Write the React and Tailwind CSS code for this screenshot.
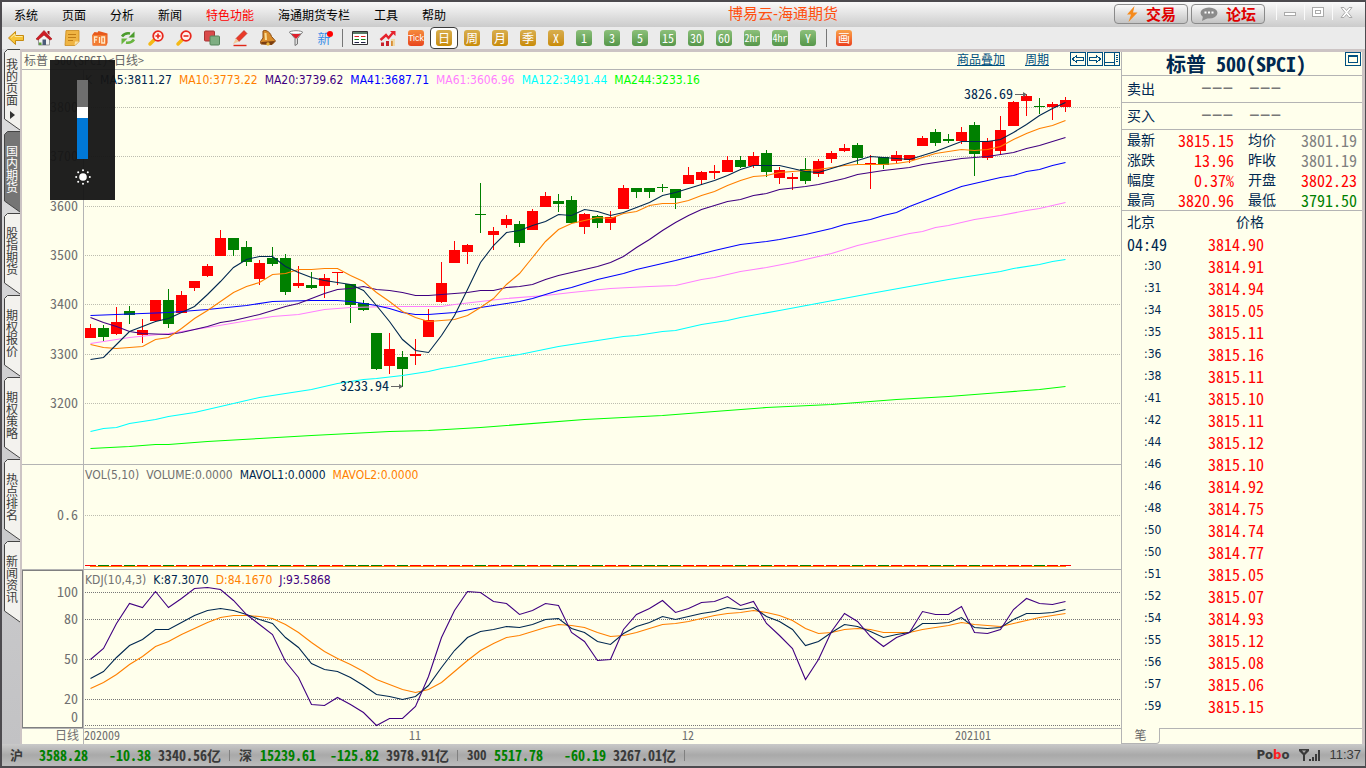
import React, { useState } from 'react'
import clsx from 'clsx'

const MONO = "[font-family:'Noto_Sans_Mono_CJK_SC','Liberation_Mono','Noto_Sans_CJK_SC',monospace]"
const SANS = "[font-family:'DejaVu_Sans_Condensed','Noto_Sans','Noto_Sans_CJK_SC',sans-serif]"

const menus = ['系统', '页面', '分析', '新闻', '特色功能', '海通期货专栏', '工具', '帮助']

const sideTabs = ['我的页面', '国内期货', '股指期货', '期权报价', '期权策略', '热点排名', '新闻资讯']

// [direction, body top, body bottom, wick top, wick bottom]
const candles = [
  ['r', 328, 338, 324, 338], ['g', 328, 337, 325, 341], ['r', 322, 334, 307, 335], ['g', 311, 315, 306, 324],
  ['r', 330, 335, 319, 343], ['r', 300, 321, 300, 321], ['g', 300, 324, 289, 328], ['r', 295, 313, 291, 313],
  ['r', 281, 288, 281, 291], ['r', 266, 276, 264, 277], ['r', 238, 256, 230, 256], ['g', 238, 250, 238, 256],
  ['g', 247, 262, 241, 266], ['r', 263, 279, 260, 285], ['g', 258, 264, 247, 266], ['g', 258, 292, 254, 295],
  ['r', 283, 286, 266, 288], ['g', 285, 288, 272, 289], ['r', 278, 286, 274, 298], ['r', 272, 273, 272, 285],
  ['g', 284, 305, 284, 323], ['g', 303, 310, 300, 311], ['g', 333, 369, 333, 370], ['r', 349, 366, 333, 374],
  ['g', 357, 369, 351, 387], ['r', 354, 356, 339, 365], ['r', 320, 337, 309, 337], ['r', 283, 302, 262, 303],
  ['r', 250, 263, 241, 263], ['r', 245, 252, 244, 264], ['g', 214, 215, 183, 233], ['r', 231, 235, 227, 250],
  ['r', 219, 225, 215, 228], ['g', 224, 243, 221, 247], ['r', 211, 230, 209, 230], ['r', 196, 207, 192, 207],
  ['g', 201, 204, 194, 212], ['g', 200, 223, 196, 223], ['r', 214, 227, 213, 234], ['g', 216, 223, 215, 228],
  ['r', 217, 223, 211, 230], ['r', 188, 209, 185, 209], ['g', 188, 192, 188, 198], ['g', 188, 192, 188, 198],
  ['g', 187, 188, 184, 192], ['g', 189, 198, 189, 209], ['r', 175, 184, 167, 184], ['r', 172, 180, 171, 185],
  ['r', 171, 173, 165, 179], ['r', 160, 172, 156, 172], ['g', 160, 167, 156, 168], ['r', 156, 166, 152, 168],
  ['g', 153, 172, 150, 177], ['r', 170, 178, 167, 184], ['r', 177, 179, 173, 190], ['g', 169, 181, 158, 184],
  ['r', 161, 174, 159, 177], ['r', 153, 159, 151, 163], ['r', 148, 151, 144, 152], ['g', 145, 158, 143, 164],
  ['r', 163, 165, 155, 189], ['g', 157, 165, 157, 169], ['r', 155, 161, 151, 163], ['r', 155, 160, 155, 163],
  ['r', 138, 146, 136, 146], ['g', 132, 143, 129, 146], ['g', 139, 141, 134, 143], ['r', 132, 141, 127, 144],
  ['g', 125, 154, 122, 176], ['r', 141, 158, 138, 160], ['r', 130, 151, 116, 154], ['r', 102, 126, 101, 126],
  ['r', 96, 101, 94, 116], ['g', 106, 107, 98, 114], ['r', 104, 107, 102, 120], ['r', 100, 107, 97, 112],
]

const ma5 = [
  359, 357, 344, 331, 326, 321, 318, 312, 306, 294, 281, 267, 259, 256, 256, 266, 272, 277, 280, 282, 284, 290, 305, 321, 339, 350,
  352, 335, 315, 289, 262, 245, 232, 230, 225, 221, 214, 215, 209, 211, 215, 212, 207, 202, 195, 192, 188, 184, 180, 175, 169, 165,
  165, 165, 168, 171, 172, 168, 164, 160, 156, 157, 158, 159, 155, 151, 146, 141, 141, 141, 139, 132, 124, 115, 108, 102,
]
const ma10 = [
  344, 347, 348, 347, 346, 339, 337, 328, 318, 310, 301, 292, 286, 282, 274, 273, 269, 269, 268, 268, 275, 281, 292, 301, 311, 317,
  321, 320, 319, 315, 307, 298, 284, 273, 257, 241, 229, 223, 220, 217, 218, 213, 211, 205, 203, 203, 200, 195, 191, 185, 180, 176,
  175, 172, 171, 170, 169, 167, 165, 164, 164, 164, 163, 161, 157, 153, 151, 149, 150, 149, 146, 139, 133, 128, 125, 120,
]

// slower averages, only the bars where the slope changes: [bar, y]
const ma20 = [
  [0, 317], [1, 322], [2, 326], [3, 331], [4, 333], [6, 334], [7, 332], [8, 329], [9, 326], [10, 322], [11, 320], [12, 317],
  [13, 314], [14, 310], [15, 306], [16, 303], [17, 298], [18, 293], [19, 289], [20, 288], [21, 286], [22, 289], [23, 290],
  [24, 292], [25, 295], [26, 295], [27, 294], [29, 292], [30, 290], [31, 290], [32, 287], [33, 286], [34, 284], [35, 279],
  [36, 275], [38, 269], [39, 266], [40, 262], [41, 256], [42, 247], [43, 239], [44, 230], [45, 222], [46, 215], [47, 209],
  [48, 205], [49, 201], [50, 199], [51, 195], [52, 193], [53, 189], [55, 186], [56, 184], [58, 178], [59, 174], [61, 170],
  [63, 167], [64, 164], [67, 158], [69, 156], [71, 152], [72, 148], [73, 145], [75, 137],
]
const ma41 = [
  [0, 315], [2, 314], [6, 312], [9, 309], [12, 305], [14, 301], [17, 300], [19, 300], [20, 301], [22, 305], [23, 308], [24, 312],
  [25, 314], [26, 314], [28, 312], [30, 307], [32, 303], [33, 301], [34, 298], [36, 290], [37, 287], [39, 279], [41, 273],
  [42, 269], [45, 260], [48, 250], [50, 244], [52, 241], [53, 239], [55, 234], [57, 228], [58, 224], [60, 219], [61, 215],
  [62, 212], [63, 206], [65, 196], [67, 186], [70, 177], [71, 175], [72, 171], [73, 169], [74, 165], [75, 162],
]
const ma61 = [
  [0, 343], [3, 337], [6, 333], [9, 327], [14, 316], [16, 314], [18, 309], [20, 307], [23, 306], [27, 306], [28, 304], [30, 301],
  [32, 298], [35, 295], [37, 292], [40, 288], [43, 286], [45, 285], [46, 282], [47, 279], [48, 277], [50, 271], [51, 269],
  [52, 267], [54, 262], [57, 253], [59, 245], [61, 239], [63, 233], [64, 231], [65, 227], [66, 225], [68, 219], [70, 215],
  [72, 210], [73, 208], [75, 202],
]
const ma122 = [
  [0, 431], [1, 428], [2, 427], [3, 423], [5, 419], [6, 416], [8, 412], [10, 406], [13, 397], [15, 393], [17, 389], [19, 383],
  [21, 379], [22, 378], [24, 375], [26, 371], [27, 368], [28, 366], [30, 361], [31, 358], [33, 354], [36, 346], [38, 342],
  [41, 336], [42, 335], [44, 331], [45, 330], [47, 324], [49, 320], [50, 317], [53, 310], [60, 293], [66, 279], [67, 277],
  [70, 271], [71, 268], [73, 264], [74, 261], [75, 259],
]
const ma244 = [
  [0, 448], [3, 446], [5, 444], [6, 444], [9, 441], [13, 438], [17, 435], [20, 433], [23, 431], [26, 430], [30, 427], [38, 419],
  [41, 417], [44, 415], [48, 411], [52, 407], [57, 404], [62, 399], [66, 396], [70, 392], [73, 389], [75, 386],
]

const kLine = [
  678, 671, 657, 645, 639, 629, 629, 622, 615, 610, 608, 610, 614, 619, 623, 637, 647, 663, 669, 671, 677, 685, 694, 696, 699, 696,
  685, 667, 650, 637, 631, 629, 626, 627, 624, 619, 618, 628, 632, 641, 644, 633, 626, 622, 616, 619, 616, 613, 611, 607, 609, 607,
  616, 621, 629, 645, 641, 632, 624, 626, 631, 637, 634, 632, 623, 623, 622, 617, 627, 628, 627, 619, 613, 613, 612, 609,
]
const dLine = [
  688, 682, 674, 664, 656, 646, 641, 634, 628, 622, 617, 615, 615, 616, 618, 624, 632, 642, 651, 658, 664, 671, 679, 684, 689, 692,
  689, 682, 671, 660, 650, 643, 637, 635, 631, 627, 624, 625, 627, 632, 636, 635, 632, 628, 624, 623, 621, 618, 615, 613, 612, 610,
  612, 615, 620, 628, 633, 632, 629, 628, 629, 632, 632, 632, 629, 627, 625, 622, 624, 625, 626, 623, 620, 617, 615, 613,
]
const jLine = [
  659, 648, 623, 603, 607, 591, 607, 598, 588, 587, 589, 600, 614, 624, 634, 661, 677, 704, 705, 697, 704, 712, 725, 718, 718, 706,
  676, 637, 610, 591, 592, 601, 603, 614, 610, 603, 605, 632, 641, 660, 659, 629, 614, 608, 600, 612, 608, 602, 601, 596, 605, 601,
  623, 635, 648, 679, 659, 631, 613, 621, 636, 646, 637, 632, 611, 614, 614, 606, 632, 633, 629, 609, 598, 603, 604, 601,
]

const priceTicks = [[3800, 107], [3700, 156], [3600, 206], [3500, 255], [3400, 304], [3300, 354], [3200, 403]]
const kdjTicks = [[100, 592], [80, 619], [50, 659], [20, 699], [0, 725]]

const barX = (i) => 90 + i * 13
const toPoints = (series) =>
  series.map((v, i) => (Array.isArray(v) ? `${barX(v[0])},${v[1]}` : `${barX(i)},${v}`)).join(' ')

const Line = ({ data, color }) => (
  <polyline points={toPoints(data)} transform="translate(.5 .5)" fill="none" stroke={color} strokeWidth="1.1" />
)

const Grid = ({ y, color }) => (
  <line x1="85" x2="1121" y1={y + 0.5} y2={y + 0.5} stroke={color} strokeDasharray="1 1" shapeRendering="crispEdges" />
)

const AxisLine = ({ top, bottom }) => (
  <line x1="83.5" x2="83.5" y1={top} y2={bottom} stroke="#b4b4b4" shapeRendering="crispEdges" />
)

const AxisLabel = ({ y, children }) => (
  <text x="78" y={y + 5} textAnchor="end" fill="#707070" className={clsx(MONO, 'text-[14px]')}>{children}</text>
)

const Legend = ({ items }) => (
  <div className={clsx(SANS, 'absolute left-[63px] top-0 flex gap-[7px] text-xs leading-5 whitespace-nowrap')}>
    {items.map(([text, color]) => (
      <span key={text} className={color}>{text}</span>
    ))}
  </div>
)

const PriceChart = () => (
  <div className="relative flex-1 min-h-0 border-b border-[#b4b4b4]">
    <svg viewBox="22 70 1099 394" className="block w-full h-full">
      {priceTicks.map(([label, y]) => (
        <React.Fragment key={label}>
          <Grid y={y} color="#bdbdb0" />
          <AxisLabel y={y}>{label}</AxisLabel>
        </React.Fragment>
      ))}
      <AxisLine top={70} bottom={464} />
      <g shapeRendering="crispEdges">
        {candles.map(([dir, top, bottom, high, low], i) => (
          <g key={i} fill={dir === 'r' ? '#ff0000' : '#008000'}>
            <rect x={barX(i)} y={high} width="1" height={low - high} />
            <rect x={barX(i) - 5} y={top} width="11" height={bottom - top} />
          </g>
        ))}
      </g>
      <Line data={ma244} color="#00ff00" />
      <Line data={ma122} color="#00ffff" />
      <Line data={ma61} color="#ff80ff" />
      <Line data={ma41} color="#0000ff" />
      <Line data={ma20} color="#400080" />
      <Line data={ma10} color="#ff8000" />
      <Line data={ma5} color="#002850" />
      <g className={clsx(MONO, 'text-[14px]')} fill="#002850">
        <text x="964" y="99">3826.69</text>
        <text x="340" y="391">3233.94</text>
      </g>
      <g stroke="#666" fill="#666">
        <path d="M1015 94.500h9" /><path d="M1023 92l4 2.500-4 2.500z" stroke="none" />
        <path d="M391 386.500h9" /><path d="M399 384l4 2.500-4 2.500z" stroke="none" />
      </g>
    </svg>
    <Legend
      items={[
        ['K', 'text-[#707070] pr-px'],
        ['MA5:3811.27', 'text-[#002850]'],
        ['MA10:3773.22', 'text-[#ff8000]'],
        ['MA20:3739.62', 'text-[#400080]'],
        ['MA41:3687.71', 'text-[#0000ff]'],
        ['MA61:3606.96', 'text-[#ff80ff]'],
        ['MA122:3491.44', 'text-[#00ffff]'],
        ['MA244:3233.16', 'text-[#00ff00]'],
      ]}
    />
  </div>
)

const VolumeChart = () => (
  <div className="relative h-[105px] border-b border-[#b4b4b4]">
    <svg viewBox="22 465 1099 104" className="block w-full h-full">
      <Grid y={515} color="#bdbdb0" />
      <AxisLabel y={515}>0.6</AxisLabel>
      <AxisLine top={465} bottom={569} />
      <g shapeRendering="crispEdges">
        {candles.map(([dir], i) => (
          <rect key={i} x={barX(i) - 5} y="565" width="11" height="1" fill={dir === 'r' ? '#ff0000' : '#008000'} />
        ))}
        <rect x="90" y="566" width="976" height="1" fill="#ff8000" />
      </g>
    </svg>
    <Legend
      items={[
        ['VOL(5,10)', 'text-[#707070]'],
        ['VOLUME:0.0000', 'text-[#707070]'],
        ['MAVOL1:0.0000', 'text-[#002850]'],
        ['MAVOL2:0.0000', 'text-[#ff8000]'],
      ]}
    />
  </div>
)

const KdjChart = () => (
  <div className="relative h-[159px] border-b border-[#b4b4b4]">
    <svg viewBox="22 570 1099 158" className="block w-full h-full">
      {kdjTicks.map(([label, y]) => (
        <React.Fragment key={label}>
          <Grid y={y} color="#777" />
          <AxisLabel y={label === 0 ? y - 8 : y}>{label}</AxisLabel>
        </React.Fragment>
      ))}
      <AxisLine top={570} bottom={728} />
      <rect x="22.500" y="570.500" width="60" height="157" fill="none" stroke="#808080" shapeRendering="crispEdges" />
      <Line data={dLine} color="#ff8000" />
      <Line data={kLine} color="#002850" />
      <Line data={jLine} color="#400080" />
    </svg>
    <Legend
      items={[
        ['KDJ(10,4,3)', 'text-[#707070]'],
        ['K:87.3070', 'text-[#002850]'],
        ['D:84.1670', 'text-[#ff8000]'],
        ['J:93.5868', 'text-[#400080]'],
      ]}
    />
  </div>
)

const DateAxis = () => (
  <svg viewBox="22 729 1099 15" className="block w-full h-[15px] overflow-visible">
    <AxisLine top={729} bottom={744} />
    <g className={clsx(MONO, 'text-[12px]')} fill="#707070">
      <text x="79" y="740" textAnchor="end">日线</text>
      <text x="84" y="740">202009</text>
      <text x="409" y="740">11</text>
      <text x="682" y="740">12</text>
      <text x="955" y="740">202101</text>
    </g>
  </svg>
)

/* ---------- toolbar icons ---------- */

const Icon = ({ children }) => (
  <svg width="18" height="18" viewBox="0 0 18 18" fill="none">{children}</svg>
)

const Zoom = ({ plus }) => (
  <Icon>
    <path d="M7.500 10.500L3 15" stroke="#f5b915" strokeWidth="3.500" strokeLinecap="round" />
    <circle cx="11" cy="7" r="4.800" fill="#fff3f0" stroke="#e8271c" strokeWidth="1.800" />
    <path d={plus ? 'M8.500 7h5M11 4.500v5' : 'M8.500 7h5'} stroke="#e8271c" strokeWidth="1.600" />
  </Icon>
)

const drawings = {
  back: (
    <Icon>
      <path d="M1.500 9L8.500 2.500V6.500H16.500V11.500H8.500V15.500Z" fill="#f7c437" stroke="#c58a12" strokeLinejoin="round" />
      <path d="M4 8.500l4-3.500v2.500h7.500" stroke="#fdeaa0" />
    </Icon>
  ),
  home: (
    <Icon>
      <path d="M3.500 9v7h11V9L9 4z" fill="#f1f1ef" stroke="#999" />
      <path d="M1 10L9 1.500l8 8.500-2 1L9 6 3 11z" fill="#cf1c24" stroke="#a01218" strokeWidth=".6" />
      <path d="M12.500 2h2v4l-2-2z" fill="#a01218" />
      <path d="M7.500 10.500h3.500V16H7.500z" fill="#4b5a78" />
      <path d="M4 13.500h2.500V16H4z" fill="#5aa03c" />
    </Icon>
  ),
  note: (
    <Icon>
      <path d="M3 1.500h13v11L12 16.500H2z" fill="#efb443" stroke="#c98a1c" strokeWidth=".8" />
      <path d="M5 5.500h8M5 8.500h8M5 11.500h5" stroke="#c07d18" />
      <path d="M11.500 16.500l.5-4h4z" fill="#fbe3a8" />
    </Icon>
  ),
  f10: (
    <Icon>
      <path d="M1.500 5.500l2-2.500 3 .5 1-1.500L16.500 4.500V14L15 16.500H1.500z" fill="#e8591c" />
      <path d="M1 6h14.500v10.500H2z" fill="#f27c32" />
      <path d="M3.500 14V8h3M3.500 10.800h2.500M8.500 8v6M10.800 8h2.700v6h-2.700z" stroke="#ffe9c8" strokeWidth="1.300" />
    </Icon>
  ),
  refresh: (
    <Icon>
      <path d="M3 7.500Q6 3.500 11 4.500" stroke="#4b9b2d" strokeWidth="2.600" />
      <path d="M15.500 2.500v6H9.500z" fill="#4b9b2d" />
      <path d="M15 10.500Q12 14.500 7 13.500" stroke="#69b53f" strokeWidth="2.600" />
      <path d="M2.500 15.500v-6h6z" fill="#69b53f" />
    </Icon>
  ),
  zoomIn: <Zoom plus />,
  zoomOut: <Zoom />,
  overlay: (
    <Icon>
      <rect x="1.500" y="2" width="10" height="10" rx="1" fill="#d94a4a" stroke="#a83434" />
      <rect x="7" y="7" width="9.500" height="9" rx="1" fill="#7fae82" stroke="#55855a" />
    </Icon>
  ),
  pen: (
    <Icon>
      <path d="M5 9.500L13 1.500l3 3L8 12.500z" fill="#ea3a28" stroke="#b3271b" strokeWidth=".6" />
      <path d="M5 9.500l3 3-6 2.500z" fill="#f2c99a" />
      <path d="M2.500 16.500h13" stroke="#e02718" strokeWidth="1.400" />
    </Icon>
  ),
  bell: (
    <Icon>
      <path d="M4 2C5.500 .5 11 2 12.500 7.500L16.500 12 13 15.500 2 15 1.500 12.500 4 9z" fill="#d98c2b" stroke="#8a4a10" />
      <path d="M6.500 4l.5 7" stroke="#fbdc95" strokeWidth="2" />
      <path d="M2 13l14-1-3 3.500L3 15z" fill="#7a3d10" />
      <circle cx="9" cy="15" r="1.700" fill="#e9b53b" />
    </Icon>
  ),
  filter: (
    <Icon>
      <path d="M2.500 3h13L10.500 9.500V15l-2.500 1.500v-7z" fill="#dcdcdc" stroke="#777" />
      <ellipse cx="9" cy="3.500" rx="6.500" ry="1.800" fill="#fff" stroke="#888" />
      <path d="M4.500 5h9L9.500 9.500h-1z" fill="#e0202c" />
    </Icon>
  ),
  list: (
    <Icon>
      <path d="M1.500 2.500h15v13h-15z" fill="#fff" stroke="#333" />
      <path d="M2 4h14" stroke="#5a7a66" strokeWidth="2" />
      <path d="M3.500 7.500h4.500M10 7.500h4.500" stroke="#d22" />
      <path d="M3.500 10.500h4.500M10 10.500h4.500" stroke="#181" />
      <path d="M3.500 13.500h4.500M10 13.500h4.500" stroke="#224" />
    </Icon>
  ),
  trend: (
    <Icon>
      <path d="M2 13.500h3V17H2zM7 12h3v5H7z" fill="#c8202a" />
      <path d="M12 10h4v7h-4z" fill="#f0d9a8" />
      <path d="M12 12h1.800v5H12z" fill="#d98d34" />
      <path d="M1.500 11L7 6l2.500 3 5-6" stroke="#e5232d" strokeWidth="2.400" />
      <path d="M11 2h5.500v5z" fill="#e5232d" />
    </Icon>
  ),
}

const tools = [
  ['back', '后退'], ['home', '首页'], ['note', '公告'], ['f10', 'F10'], ['refresh', '刷新'], ['zoomIn', '放大'],
  ['zoomOut', '缩小'], ['overlay', '叠加'], ['pen', '画线'], ['bell', '预警'], ['filter', '选股'],
]
const goldPeriods = ['日', '周', '月', '季', 'X']
const greenPeriods = ['1', '3', '5', '15', '30', '60', '2hr', '4hr', 'Y']

const ToolButton = ({ label, active, onClick, children }) => (
  <button
    type="button"
    aria-label={label}
    onClick={onClick}
    className={clsx(
      'w-7 h-[22px] shrink-0 flex items-center justify-center',
      active && 'bg-white border border-[#3c3c3c] rounded',
    )}
  >
    {children}
  </button>
)

const Tile = ({ tone, children }) => (
  <span
    className={clsx(
      'w-4 h-4 rounded-[3px] flex items-center justify-center text-white leading-none whitespace-nowrap',
      tone === 'orange' ? "[font-family:'Liberation_Sans',sans-serif]" : MONO,
      tone === 'gold' && 'bg-linear-to-b from-[#d8ae4c] to-[#c98c00] text-[12px]',
      tone === 'green' && 'bg-linear-to-b from-[#8cc07a] to-[#55974a] text-[12px]',
      tone === 'greenSmall' && 'bg-linear-to-b from-[#8cc07a] to-[#55974a] text-[10px]',
      tone === 'orange' && 'bg-linear-to-b from-[#f58a3c] to-[#e8431c] text-[9px]',
      tone === 'draw' && 'bg-linear-to-b from-[#f9a24a] to-[#ea3c1c] text-[12px]',
    )}
  >
    {children}
  </span>
)

const Separator = () => <span className="w-2 shrink-0 flex justify-center"><span className="w-px h-[18px] bg-[#777]" /></span>

const Toolbar = () => {
  const [period, setPeriod] = useState('日')
  return (
    <div className="flex items-center h-[22px] bg-[#ebebeb]">
      {tools.map(([name, label]) => (
        <ToolButton key={name} label={label}>{drawings[name]}</ToolButton>
      ))}
      <ToolButton label="新功能">
        <span className="relative text-[13px] leading-none text-[#3b8fe8]">
          新
          <span className="absolute -top-px -right-0.5 w-1.5 h-1.5 rounded-full bg-[#ff0000]" />
        </span>
      </ToolButton>
      <Separator />
      <ToolButton label="报价">{drawings.list}</ToolButton>
      <ToolButton label="分时">{drawings.trend}</ToolButton>
      <ToolButton label="Tick"><Tile tone="orange">Tick</Tile></ToolButton>
      {goldPeriods.map((p) => (
        <ToolButton key={p} label={p} active={period === p} onClick={() => setPeriod(p)}>
          <Tile tone="gold">{p}</Tile>
        </ToolButton>
      ))}
      {greenPeriods.map((p) => (
        <ToolButton key={p} label={p} active={period === p} onClick={() => setPeriod(p)}>
          <Tile tone={p.length > 2 ? 'greenSmall' : 'green'}>{p}</Tile>
        </ToolButton>
      ))}
      <Separator />
      <ToolButton label="画"><Tile tone="draw">画</Tile></ToolButton>
    </div>
  )
}

const PillButton = ({ icon, children }) => (
  <button
    type="button"
    className="flex items-center justify-center gap-2 w-[74px] h-5 rounded border border-[#8a8a8a] bg-linear-to-b from-[#fafafa] to-[#c4c4c4] text-[15px] leading-none font-bold text-[#e00000]"
  >
    {icon}
    {children}
  </button>
)

const WindowButton = ({ label, children }) => (
  <button type="button" aria-label={label} className="w-7 h-4 flex items-center justify-center border-l border-[#fafafa]">
    <svg width="13" height="11" viewBox="0 0 13 11" fill="none" stroke="#aaa">{children}</svg>
  </button>
)

const TitleBar = () => (
  <header className="relative flex items-start justify-between h-[25px] bg-linear-to-b from-[#fafafa] to-[#cbcbcb]">
    <nav className="flex gap-6 pl-3 pt-1 text-xs leading-5">
      {menus.map((m) => (
        <a key={m} href="#" className={m === '特色功能' ? 'text-[#ff0000]' : 'text-black'}>{m}</a>
      ))}
    </nav>
    <h1 className="absolute left-[726px] top-0.5 text-[15px] leading-5 text-[#ff5010]">博易云-海通期货</h1>
    <div className="flex gap-[3px] pt-0.5 pr-[5px]">
      <PillButton
        icon={<svg width="12" height="16" viewBox="0 0 12 16"><path d="M8.500 0L1 8.500h4L2.500 16 11.500 6.500H7z" fill="#f58a1c" /></svg>}
      >
        交易
      </PillButton>
      <PillButton
        icon={
          <svg width="18" height="14" viewBox="0 0 18 14">
            <ellipse cx="9" cy="6" rx="8.500" ry="5.500" fill="#8c8c8c" />
            <path d="M3 9l-1 5 6-3z" fill="#8c8c8c" />
            <path d="M4.500 5.500h2M8 5.500h2M11.500 5.500h2" stroke="#fff" strokeWidth="2" />
          </svg>
        }
      >
        论坛
      </PillButton>
      <div className="flex pl-2">
        <WindowButton label="最小化"><rect x=".5" y="5.500" width="11" height="3" fill="#fff" /></WindowButton>
        <WindowButton label="还原"><rect x=".5" y=".5" width="11" height="9" fill="#fff" /><rect x="3.500" y="3.500" width="5" height="3" /></WindowButton>
        <WindowButton label="关闭"><path d="M1 .5h3l2.500 3 2.500-3h3l-4 5 4 5H9l-2.500-3-2.500 3H1l4-5z" fill="#fff" /></WindowButton>
      </div>
    </div>
  </header>
)

const SideTab = ({ label, active, first, onClick }) => (
  <button
    type="button"
    aria-label={label}
    onClick={onClick}
    className={clsx('relative block w-4 h-[82px] text-xs leading-3', active ? 'text-white' : 'text-[#3c3c3c]')}
  >
    <svg viewBox="0 0 16 82" className="absolute inset-0 w-full h-full">
      <path d="M16 .5H3.500L.5 3.500V70L16 81z" fill={active ? '#757575' : '#f3f2ee'} />
      <path d="M16 .5H3.500L.5 3.500V70L16 81" fill="none" stroke="#444" />
    </svg>
    <span className={clsx('relative flex flex-col items-center h-full', first ? 'pt-2.5' : 'pt-[15px]')}>
      {label.split('').map((c) => <span key={c}>{c}</span>)}
      {first && (
        <svg width="5" height="8" viewBox="0 0 5 8" className="mt-1"><path d="M0 0l5 4-5 4z" fill="#333" /></svg>
      )}
    </span>
  </button>
)

const SideTabs = () => {
  const [current, setCurrent] = useState('国内期货')
  return (
    <aside className="w-[18px] shrink-0 pl-0.5 bg-linear-to-b from-[#dededf] to-[#c2c2c4]">
      {sideTabs.map((t, i) => (
        <SideTab key={t} label={t} first={i === 0} active={t === current} onClick={() => setCurrent(t)} />
      ))}
    </aside>
  )
}

const NavIcon = ({ label, children }) => (
  <button type="button" aria-label={label} className="block">
    <svg width="16" height="14" viewBox="0 0 16 14" fill="none" stroke="#005080" shapeRendering="crispEdges">
      <rect x=".5" y=".5" width="15" height="13" />
      {children}
    </svg>
  </button>
)

const ChartHeader = () => (
  <div className="flex items-start h-[18px] pl-0.5 border-b border-[#b4b4b4]">
    <h2 className={clsx(MONO, 'flex-1 text-xs leading-4 text-[#666]')}>标普 500(SPCI)&lt;日线&gt;</h2>
    <a href="#" className="mr-5 text-xs leading-4 text-[#005080] underline">商品叠加</a>
    <a href="#" className="mr-[21px] text-xs leading-4 text-[#005080] underline">周期</a>
    <div className="flex gap-px pr-px">
      <NavIcon label="上一个"><path d="M2.500 7L6.500 3.500V5.500H13.500V8.500H6.500V10.500Z" /></NavIcon>
      <NavIcon label="下一个"><path d="M13.500 7L9.500 3.500V5.500H2.500V8.500H9.500V10.500Z" /></NavIcon>
      <NavIcon label="布局"><path d="M1 10.500h9M10.500 1v12M12 3.500h2M12 5.500h2M12 7.500h2M12 9.500h2" /></NavIcon>
    </div>
  </div>
)

const BrightnessOverlay = () => (
  <div className="absolute left-7 top-2 w-[65px] h-[140px] flex flex-col items-center pt-5 bg-[#141414]/95">
    <div className="w-[11px] h-[27px] bg-[#6e6e6e]" />
    <div className="w-[11px] h-[11px] bg-white" />
    <div className="w-[11px] h-[41px] bg-[#0078d7]" />
    <svg width="16" height="16" viewBox="0 0 16 16" fill="#fff" className="mt-2.5">
      <circle cx="8" cy="8" r="3.800" />
      {[0, 45, 90, 135, 180, 225, 270, 315].map((a) => (
        <circle key={a} cx="8" cy="1.200" r="1" transform={`rotate(${a} 8 8)`} />
      ))}
    </svg>
  </div>
)

const quotes = [
  ['最新', '3815.15', '均价', '3801.19', 'text-[#808080]'],
  ['涨跌', '13.96', '昨收', '3801.19', 'text-[#808080]'],
  ['幅度', '0.37%', '开盘', '3802.23', 'text-[#ff0000]'],
  ['最高', '3820.96', '最低', '3791.50', 'text-[#008000]'],
]

const ticks = [
  ['04:49', '3814.90'], [':30', '3814.91'], [':31', '3814.94'], [':34', '3815.05'], [':35', '3815.11'], [':36', '3815.16'],
  [':38', '3815.11'], [':41', '3815.10'], [':42', '3815.11'], [':44', '3815.12'], [':46', '3815.10'], [':46', '3814.92'],
  [':48', '3814.75'], [':50', '3814.74'], [':50', '3814.77'], [':51', '3815.05'], [':52', '3815.07'], [':54', '3814.93'],
  [':55', '3815.12'], [':56', '3815.08'], [':57', '3815.06'], [':59', '3815.15'],
]

const DASHES = "[font-family:'Liberation_Mono',monospace] text-lg leading-none text-[#777]"

const QuotePanel = () => (
  <section className="w-[241px] shrink-0 flex flex-col border-l border-[#b4b4b4] text-sm text-[#002850]">
    <div className="relative h-6 border-b border-[#b4b4b4]">
      <h2 className={clsx(MONO, 'pr-3 text-center text-xl leading-6 font-bold')}>标普 500(SPCI)</h2>
      <button type="button" aria-label="最大化" className="absolute right-px top-0">
        <svg width="16" height="14" viewBox="0 0 16 14" fill="none" stroke="#005080" shapeRendering="crispEdges">
          <rect x=".5" y=".5" width="15" height="13" />
          <rect x="3.500" y="3.500" width="9" height="7" />
          <path d="M3 4.500h10" />
        </svg>
      </button>
    </div>
    {['卖出', '买入'].map((side) => (
      <div key={side} className="flex h-[27px] pl-[5px] items-center border-b border-[#b4b4b4]">
        <span className="w-[74px]">{side}</span>
        <span className={clsx(DASHES, 'w-12')}>−−−</span>
        <span className={DASHES}>−−−</span>
      </div>
    ))}
    <table className="w-full border-b border-[#b4b4b4] border-separate border-spacing-0">
      <tbody>
        {quotes.map(([a, av, b, bv, color]) => (
          <tr key={a} className="h-5 leading-5">
            <th className="w-[38px] p-0 pl-[5px] text-left font-normal">{a}</th>
            <td className={clsx(MONO, 'p-0 text-right text-base leading-5 text-[#ff0000]')}>{av}</td>
            <th className="w-[46px] p-0 pl-3.5 text-left font-normal">{b}</th>
            <td className={clsx(MONO, 'w-[82px] p-0 pr-[5px] text-right text-base leading-5', color)}>{bv}</td>
          </tr>
        ))}
      </tbody>
    </table>
    <div className="flex-1 min-h-0">
      <table className="w-full border-separate border-spacing-0">
        <thead>
          <tr className="h-[22px]">
            <th className="w-[86px] p-0 pl-[5px] text-left font-normal leading-[22px]">北京</th>
            <th className="p-0 pl-7 text-left font-normal leading-[22px]">价格</th>
          </tr>
        </thead>
        <tbody>
          {ticks.map(([time, price], i) => (
            <tr key={i} className="h-[22px]">
              <td className={clsx('p-0', i === 0 ? clsx(MONO, 'pl-[5px] text-base leading-[22px]') : clsx(SANS, 'pl-[22px] text-xs leading-[22px]'))}>
                {time}
              </td>
              <td className={clsx(MONO, 'p-0 text-base leading-[22px] text-[#ff0000]')}>{price}</td>
            </tr>
          ))}
        </tbody>
      </table>
    </div>
    <div className="flex h-4">
      <button type="button" className="w-[38px] h-4 border-b border-r border-[#b4b4b4] rounded-br text-xs leading-none text-[#666]">笔</button>
      <div className="flex-1 border-t border-[#b4b4b4]" />
    </div>
  </section>
)

const indices = [
  ['沪', '3588.28', '-10.38', '3340.56亿', 'w-[29px]'],
  ['深', '15239.61', '-125.82', '3978.91亿', 'w-[21px]'],
  ['300', '5517.78', '-60.19', '3267.01亿', 'w-[27px]'],
]

const StatusBar = () => (
  <footer className="flex items-center h-[22px] pl-2 pr-1 bg-linear-to-b from-[#c9c9c9] via-[#a9a9a9] to-[#bcbcbc] text-sm font-bold text-[#3a3a3a]">
    <div className={clsx(MONO, 'flex-1 flex items-center leading-[22px] whitespace-nowrap')}>
      {indices.map(([name, last, change, turnover, nameWidth]) => (
        <React.Fragment key={name}>
          <span className={clsx(nameWidth, 'text-[13px]')}>{name}</span>
          <span className="text-[#008000]">{last}</span>
          <span className="w-[63px] text-right text-[#008000]">{change}</span>
          <span className="ml-[7px]">{turnover}</span>
          <span className="w-px h-[11px] ml-2 mr-[9px] bg-[#808080]" />
        </React.Fragment>
      ))}
    </div>
    <div className="flex items-center">
      <span className={clsx(SANS, 'text-[13px]')}>Po<span className="text-[#ff2020]">b</span>o</span>
      <svg width="22" height="13" viewBox="0 0 22 13" fill="#3a3a3a" className="ml-2.5">
        <path d="M0 0h10v2L6 6v6H4V6L0 2z" />
        <path d="M3 1.500h4L5 4z" fill="#aaa" />
        <path d="M10 10h2v2h-2zM13 8h2v4h-2zM16 5h2v7h-2zM19 1h2v11h-2z" />
      </svg>
      <span className="ml-2 text-[13px] font-normal">11:37</span>
    </div>
  </footer>
)

const App = () => (
  <div className="h-screen min-h-[560px] flex flex-col p-0.5 pr-px bg-[#4d4b4f] [font-family:'Liberation_Sans','Noto_Sans_CJK_SC',sans-serif]">
    <TitleBar />
    <Toolbar />
    <main className="flex-1 min-h-0 flex bg-[#ccc4c4]">
      <SideTabs />
      <div className="flex-1 min-w-0 flex pt-0.5 ml-0.5 mr-[3px]">
        <div className="flex-1 min-w-0 flex bg-[#ffffec] border-t border-[#ccc4c4]">
          <section className="relative flex-1 min-w-0 flex flex-col">
            <ChartHeader />
            <PriceChart />
            <VolumeChart />
            <KdjChart />
            <DateAxis />
            <BrightnessOverlay />
          </section>
          <QuotePanel />
        </div>
      </div>
    </main>
    <StatusBar />
  </div>
)

export default App
